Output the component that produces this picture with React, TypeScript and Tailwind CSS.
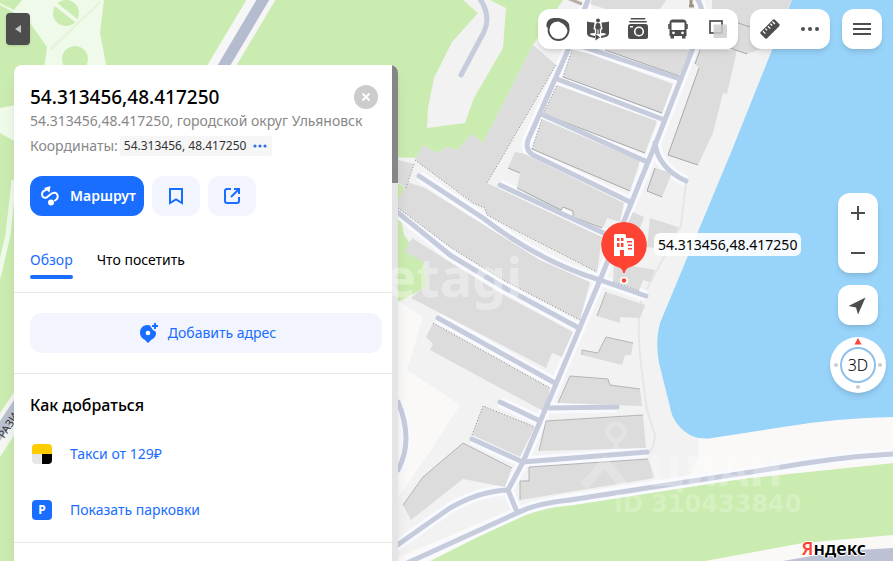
import { useState } from "react"
import type { ReactNode } from "react"

const BUILDINGS = [
  "592,0 666,0 652,22 640,20 590,4",
  "712,0 792,0 770,46 747,54 730,48 712,14",
  "605,50 690,50 679,76",
  "572,50 590,54 673,84 662,114 563,77",
  "557,85 657,121 645,153 543,114",
  "542,119 640,161 630,191 532,149",
  "515,152 525,154 624,203 620,222 607,218 603,228 573,217 573,211 563,207 561,212 517,188 520,173 508,168",
  "533,45 556,65 487,183 602,237 597,272 515,230 487,215 485,208 473,203 415,160 417,156 423,145 437,153 447,147 457,150 472,134 483,143",
  "398,160 414,164 406,188 398,182",
  "407,182 425,188 500,235 540,260 590,282 580,320 503,280 450,247 398,208 398,200",
  "412,238 450,262 500,293 573,332 562,357 552,353 546,368 440,313 411,298 427,285 424,262 405,252",
  "433,323 550,388 545,412 430,350 433,344 426,337",
  "483,406 535,427 520,457 472,435",
  "463,443 512,468 505,487 463,479 411,520 403,505 423,477",
  "570,376 608,379 610,385 640,389 642,406 558,403",
  "546,421 643,415 646,448 539,451",
  "529,467 648,459 655,478 520,500 520,481 529,480",
  "606,292 645,305 640,318 620,317 620,323 597,316",
  "606,337 633,343 631,355 625,355 622,365 582,355 582,350 598,353",
  "614,263 655,270 650,282 643,280 639,291 613,282",
  "633,212 644,217 638,234 625,228",
  "650,218 678,227 672,250 647,247",
  "655,168 672,173 662,197 647,191",
  "700,50 695,64 699,68 668,155 698,165 713,133 723,93 727,94 737,50",
]

const ROADS = [
  "M698 0 Q705 12 700 30 L657 140 L600 280 L523 462 L508 490 L517 512",
  "M588 0 L568 50 L528 140 Q525 150 533 155 L630 202",
  "M572 43 L680 79",
  "M557 79 L662 119",
  "M541 114 L645 161",
  "M655 143 Q658 168 686 181",
  "M500 185 L610 236",
  "M419 176 L483 218 Q540 262 600 280 L646 296",
  "M390 206 L450 255 L503 287 L577 327",
  "M438 318 L553 382",
  "M500 402 L538 420",
  "M472 439 L523 462 L647 452",
  "M550 408 L617 407",
  "M386 553 L450 508 Q480 491 508 490",
  "M398 402 Q414 440 398 470",
  "M405 564 L517 513 Q537 503 570 500 L647 488 L770 469 Q837 457 893 454 L2400 380",
]

function CityMap() {
  return (
    <svg className="absolute inset-0 h-full w-full" aria-hidden="true">
      <rect width="100%" height="100%" fill="#cbecb0" />

      {/* squares and alleys of the park on the left */}
      <path d="M20 0 H104 L100 33 L107 70 H44 L47 47 L30 23 L13 12 L0 5 V0Z" fill="#f0faea" />
      <path d="M0 0 H22 L14 10 L0 3Z" fill="#cbecb0" />
      <circle cx="66" cy="13" r="13" fill="#cbecb0" />
      <path d="M54 3 L78 22" stroke="#f0faea" strokeWidth="4" />
      <circle cx="75" cy="59" r="13" fill="#cbecb0" />
      <path d="M100 2 L50 50" stroke="#e3f4d7" strokeWidth="2" />
      <path d="M0 108 L16 105 V142 L0 133Z" fill="#f0faea" />
      <path d="M14 180 L8 235 L-2 278" fill="none" stroke="#f0faea" strokeWidth="5" />
      <path d="M-10 450 L26 396" stroke="#f4f6f2" strokeWidth="24" />
      <path d="M-10 446 L26 392" stroke="#b9c0d0" strokeWidth="11" />
      <text x="4" y="439" transform="rotate(-57 4 439)" className="font-['Noto_Sans',sans-serif] text-[11px]" fill="#333">РАЗИ</text>
      <path d="M265 -7 L215 77" stroke="#f6f6f6" strokeWidth="25" />
      <path d="M267 -7 L217 77" stroke="#b5bccf" strokeWidth="11" />

      {/* land */}
      <path d="M463 0 L478 13 L452 42 L434 78 L428 108 L427 128 L465 123 L474 98 L503 48 L506 8 L490 0Z" fill="#f2f2f2" />
      <path d="M478 -4 Q492 15 484 32 L461 75" fill="none" stroke="#c6ccdb" strokeWidth="5" strokeLinecap="round" />
      <path d="M563 0 L533 45 L483 143 L472 134 L457 150 L447 147 L437 153 L423 145 L417 158 L390 157 V183 L406 190 L398 203 L404 235 L424 262 L427 287 L390 306 V561 H430 L517 517 Q537 507 557 504 L647 493 L730 480 L893 463 L2400 390 V0Z" fill="#f2f2f2" />
      <path d="M390 236 L398 234 L422 262 L424 287 L390 304Z" fill="#cbecb0" />
      <path d="M398 183 L405 188 L398 200Z" fill="#cbecb0" />
      <path d="M390 296 L423 317 L407 370 L460 405 L433 447 L390 510Z" fill="#faf9f7" />
      <path d="M697 436 L893 412 L2400 390 L893 463 L730 480 L647 493 L557 504 L517 517 L430 561 H390 L517 507 L560 495 L690 475 Q703 450 697 436Z" fill="#faf9f7" />
      <path d="M792 0 L732 150 L660 323 Q655 340 659 363 L670 407 Q673 425 690 435 Q700 440 712 438 L783 427 Q837 418 893 417 L2400 340 V0Z" fill="#98d3f9" />
      <path d="M686 182 L681 225 L642 298 Q636 320 641 365 L647 410 L655 435 Q654 452 644 456" fill="none" stroke="#e6e6e6" strokeWidth="2" />

      <g fill="none" stroke="#f9faff" strokeWidth="11" strokeLinejoin="round">
        {ROADS.map((d) => <path key={d} d={d} />)}
      </g>
      <g fill="#dcdcdc">
        {BUILDINGS.map((p) => <polygon key={p} points={p} />)}
      </g>
      <g fill="none" stroke="#a9a9a9" strokeWidth="1">
        <path d="M563 77 L662 113 M543 114 L645 153 M532 149 L630 191 M605 50 L679 76 M508 168 L520 173 M517 188 L561 210 L563 207 L573 211 V217 L602 228 M699 68 L668 155 L698 165 M655 168 L647 191 L662 197 M712 14 L750 27 M730 48 L747 54 M700 50 L695 64" />
        <path d="M558 403 L570 376 L608 379 L610 385 L640 389 M539 451 L546 421 L643 415 M520 500 V481 H529 V467 L648 459 M403 505 L423 477 L463 443 L512 468 M597 316 L606 292 M582 355 V350 L598 353 L606 337 L633 343" strokeOpacity=".8" />
        <path d="M556 65 L487 183 M415 160 L473 203 L485 208 L487 215 L515 230 L597 272 M398 208 L450 247 L503 280 L580 320 M433 323 L550 388 M472 435 L483 406 L535 427 M414 164 L406 188 M532 149 L542 119 M543 114 L557 85 M563 77 L572 50 M613 282 L639 291" strokeDasharray="1 2" stroke="#888" />
      </g>
      <g fill="none" stroke="#c6ccdb" strokeWidth="5" strokeLinejoin="round" strokeLinecap="round">
        {ROADS.map((d) => <path key={d} d={d} />)}
      </g>
      <path d="M567 -2 L582 4" stroke="#b8aea6" strokeWidth="3" />
      <path d="M689 6 H694 M691 0 V6" stroke="#a09384" strokeWidth="3" />

      {/* avenue in the bottom right corner */}
      <path d="M705 561 L803 543 L893 535 L2400 400 V900 H705Z" fill="#faf9f8" />
      <path d="M783 561 Q840 550 893 548 L2400 420 V900 H783Z" fill="#bcc2d3" />
    </svg>
  )
}

function Watermarks() {
  return (
    <svg className="pointer-events-none absolute inset-0 h-full w-full font-bold" aria-hidden="true">
      <text x="384" y="297" fill="#fff" fillOpacity=".35" className="font-['Noto_Sans',sans-serif] text-[54px]">etagi</text>
      <g fill="none" stroke="#fff" strokeOpacity=".22">
        <circle cx="616" cy="432" r="8" strokeWidth="5" />
        <path d="M616 442 V451" strokeWidth="4" />
        <path d="M584 486 L605 462 L624 486" strokeWidth="9" />
      </g>
      <text x="648" y="486" fill="#fff" fillOpacity=".25" className="font-['DejaVu_Sans',sans-serif] text-[40px]">ЦИАН</text>
      <text x="614" y="512" fill="#fff" fillOpacity=".22" className="font-['DejaVu_Sans',sans-serif] text-[24px]">ID 310433840</text>
    </svg>
  )
}

function ToolButton({ label, children, onClick }: { label: string; children: ReactNode; onClick?: () => void }) {
  return (
    <button type="button" aria-label={label} onClick={onClick} className="flex h-10 w-10 items-center justify-center text-[#4d4d4d]">
      {children}
    </button>
  )
}

function Toolbar() {
  return (
    <header className="flex justify-end gap-3 pt-[9px] pr-[11px]">
      <div className="flex rounded-xl bg-white shadow-md">
        <ToolButton label="Алиса">
          <svg width="24" height="24" viewBox="0 0 24 24">
            <circle cx="12.500" cy="13" r="10" fill="#fff" stroke="#4d4d4d" strokeWidth="1.800" />
            <path d="M.5 10 C0 3 4 .8 10 1 C16 .8 22 3 23.300 8 V14 L21.500 13 C20 9 17 6 12.500 4.500 C8 4 4 7 2.500 11Z" fill="#4d4d4d" />
          </svg>
        </ToolButton>
        <ToolButton label="Панорамы">
          <svg width="24" height="24" viewBox="0 0 24 24" fill="#4d4d4d">
            <path d="M1 4.500 Q4 5.500 8.500 5.500 L7.500 12.500 H8.800 V16 Q5 16 3.500 17 Q5 18.500 9 19 V21 Q1 20 1 16.500Z" />
            <path d="M23 4.500 Q20 5.500 15.500 5.500 L16.500 12.500 H15.200 V16 Q19 16 20.500 17 Q19 18.500 15 19 V21 Q23 20 23 16.500Z" />
            <circle cx="12" cy="3.500" r="2" />
            <path d="M10 6.500 Q12 5.500 14 6.500 L15 11.500 H13.800 V17 H12.500 V12.500 H11.500 V17 H10.200 V11.500 H9Z" />
            <path d="M9.500 17 L14 20.200 L9.500 23.500Z" />
          </svg>
        </ToolButton>
        <ToolButton label="Фото">
          <svg width="24" height="24" viewBox="0 0 24 24" fill="#4d4d4d">
            <rect x="4.500" y="1" width="15" height="1.500" rx=".7" />
            <rect x="3" y="4" width="18" height="1.600" rx=".8" />
            <rect x="2" y="7" width="20" height="15" rx="2.500" />
            <circle cx="13" cy="14.500" r="4.300" fill="none" stroke="#fff" strokeWidth="1.600" />
            <rect x="4" y="9" width="3" height="1.500" fill="#fff" />
          </svg>
        </ToolButton>
        <ToolButton label="Транспорт">
          <svg width="24" height="24" viewBox="0 0 24 24">
            <path fillRule="evenodd" fill="#4d4d4d" d="M7 2.500 H17 Q20.500 2.500 20.500 6 V19 H19.500 V21.500 H16 V19 H8 V21.500 H4.500 V19 H3.500 V6 Q3.500 2.500 7 2.500Z M5.500 5.500 V13 H18.500 V5.500Z M7.500 14.500 a1.400 1.400 0 1 0 .01 0Z M16.500 14.500 a1.400 1.400 0 1 0 .01 0Z" />
            <path d="M3 7 V12 M21 7 V12" stroke="#4d4d4d" strokeWidth="1.600" />
          </svg>
        </ToolButton>
        <ToolButton label="Слои">
          <svg width="24" height="24" viewBox="0 0 24 24">
            <rect x="4" y="4" width="12" height="12" fill="none" stroke="#4d4d4d" strokeWidth="1.700" />
            <rect x="7.500" y="7.500" width="13.500" height="13.500" rx="1" fill="#ccc" fillOpacity=".85" />
          </svg>
        </ToolButton>
      </div>
      <div className="flex rounded-xl bg-white shadow-md">
        <ToolButton label="Линейка">
          <svg width="24" height="24" viewBox="0 0 24 24">
            <g transform="rotate(-45 12 12)">
              <rect x="2" y="7.500" width="20" height="9" rx="1.500" fill="#4d4d4d" />
              <path d="M5.500 8.500 V12 M9 8.500 V11 M12.500 8.500 V12 M16 8.500 V11 M19 8.500 V12" stroke="#fff" strokeWidth="1.300" />
            </g>
          </svg>
        </ToolButton>
        <ToolButton label="Ещё">
          <svg width="20" height="4" viewBox="0 0 20 4" fill="#4d4d4d">
            <circle cx="3" cy="2" r="2" />
            <circle cx="10" cy="2" r="2" />
            <circle cx="17" cy="2" r="2" />
          </svg>
        </ToolButton>
      </div>
      <div className="flex rounded-xl bg-white shadow-md">
        <ToolButton label="Меню">
          <svg width="18" height="14" viewBox="0 0 18 14">
            <path d="M0 2 H18 M0 7 H18 M0 12 H18" stroke="#4d4d4d" strokeWidth="2" />
          </svg>
        </ToolButton>
      </div>
    </header>
  )
}

function MapControls() {
  return (
    <div className="mt-36 mr-[7px] flex flex-col items-center gap-3 self-end">
      <div className="flex flex-col rounded-xl bg-white shadow-md">
        <ToolButton label="Приблизить">
          <svg width="14" height="14" viewBox="0 0 14 14"><path d="M0 7 H14 M7 0 V14" stroke="#4d4d4d" strokeWidth="2" /></svg>
        </ToolButton>
        <ToolButton label="Отдалить">
          <svg width="14" height="14" viewBox="0 0 14 14"><path d="M0 7 H14" stroke="#4d4d4d" strokeWidth="2" /></svg>
        </ToolButton>
      </div>
      <div className="flex rounded-xl bg-white shadow-md">
        <ToolButton label="Моё местоположение">
          <svg width="24" height="24" viewBox="0 0 24 24"><path d="M19.500 4.500 L12 21.500 L10 14.500 L2.500 13Z" fill="#4d4d4d" /></svg>
        </ToolButton>
      </div>
      <button type="button" className="relative flex h-14 w-14 items-center justify-center rounded-full bg-white shadow-md">
        <svg className="absolute inset-0" width="56" height="56" viewBox="0 0 56 56">
          <path d="M28 1 L31.500 7.500 H24.500Z" fill="#ff4433" />
          <circle cx="28" cy="28" r="17" fill="none" stroke="#8fc0ea" strokeWidth="2" />
          <circle cx="6" cy="28" r="2" fill="#ccc" />
          <circle cx="50" cy="28" r="2" fill="#ccc" />
          <circle cx="28" cy="50" r="2" fill="#ccc" />
        </svg>
        <span className="relative text-base font-light text-black">3D</span>
      </button>
    </div>
  )
}

function Marker() {
  return (
    <div className="absolute top-[221px] left-[600px] flex items-start gap-[6px]">
      <svg width="48" height="66" viewBox="0 0 48 66" aria-hidden="true">
        <rect x="20" y="56" width="8" height="7" rx="3" fill="#fff" />
        <circle cx="24" cy="59.500" r="2.200" fill="#f43" />
        <path d="M24 1 A23 23 0 0 1 29 46.400 Q25.500 47.500 24.700 52 H23.300 Q22.500 47.500 19 46.400 A23 23 0 0 1 24 1Z" fill="#ff4433" />
        <path fill="#fff" fillRule="evenodd" d="M15 13 H24 Q26 13 26 15 V17 H31 Q34 17 34 20 V35 H24 V29 H20 V35 H14 V14Z M17 17 V20 H19.500 V17Z M21 17 V20 H23.500 V17Z M17 22 V26 H19.500 V22Z M21 22 V26 H23.500 V22Z M27 20 V21.500 H32 V20Z M28 23.500 V25 H32 V23.500Z M28 27 V28.500 H32 V27Z" />
      </svg>
      <span className="mt-3 rounded-md bg-white/90 px-1 text-sm leading-[23px] whitespace-nowrap text-black">54.313456,48.417250</span>
    </div>
  )
}

function PlacePanel() {
  const [tab, setTab] = useState("overview")

  const tabs = [
    { id: "overview", title: "Обзор" },
    { id: "visit", title: "Что посетить" },
  ]

  return (
    <section className="mt-5 ml-3.5 flex min-h-0 flex-1 overflow-hidden rounded-t-lg bg-white shadow-lg">
      <div className="min-w-0 flex-1 overflow-hidden">
        <div className="pt-[18px] pr-2.5 pl-4">
          <div className="flex items-center justify-between">
            <h1 className="text-[19px] leading-7 font-medium text-black">54.313456,48.417250</h1>
            <button type="button" aria-label="Закрыть" className="mr-1 flex h-6 w-6 items-center justify-center rounded-full bg-[#ccc]">
              <svg width="8" height="8" viewBox="0 0 8 8"><path d="M.5 .5 L7.500 7.500 M7.500 .5 L.5 7.500" stroke="#fff" strokeWidth="2" /></svg>
            </button>
          </div>
          <p className="text-sm leading-5 whitespace-nowrap text-[#888]">54.313456,48.417250, городской округ Ульяновск</p>
          <div className="mt-[5px] flex items-center text-sm leading-5 text-[#888]">
            <span>Координаты:</span>
            <span className="ml-0.5 flex h-5 items-center rounded-xs bg-[#f6f6f6] pr-1 pl-1 text-xs text-[#333]">
              54.313456, 48.417250
              <button type="button" aria-label="Другие форматы" className="ml-1.5">
                <svg width="16" height="4" viewBox="0 0 16 4" fill="#2f6fe4">
                  <circle cx="3" cy="2" r="1.600" />
                  <circle cx="8" cy="2" r="1.600" />
                  <circle cx="13" cy="2" r="1.600" />
                </svg>
              </button>
            </span>
          </div>

          <div className="mt-5 flex gap-2">
            <button type="button" className="flex h-10 items-center gap-2 rounded-xl bg-[#196dff] px-2 text-sm font-semibold text-white">
              <svg width="24" height="24" viewBox="0 0 24 24" fill="none" stroke="#fff" strokeWidth="2" strokeLinecap="round">
                <path d="M8 6 Q4 7 4 10.500 Q4.500 14.500 8.500 13.500 L13 10 Q18 7 19.500 11 Q20.500 14.500 17 16.500" />
                <path d="M6 4 L12.500 2 L11.500 8.500Z" fill="#fff" stroke="none" />
                <circle cx="13" cy="18.500" r="3" fill="#fff" stroke="none" />
              </svg>
              Маршрут
            </button>
            <button type="button" aria-label="Сохранить" className="flex h-10 w-12 items-center justify-center rounded-xl bg-[#f2f5fd]">
              <svg width="24" height="24" viewBox="0 0 24 24"><path d="M6 5 H18 V19 L12 15.500 L6 19Z" fill="none" stroke="#196dff" strokeWidth="2" /></svg>
            </button>
            <button type="button" aria-label="Поделиться" className="flex h-10 w-12 items-center justify-center rounded-xl bg-[#f2f5fd]">
              <svg width="24" height="24" viewBox="0 0 24 24" fill="none" stroke="#196dff" strokeWidth="2">
                <path d="M11 5 H7 Q5 5 5 7 V17 Q5 19 7 19 H17 Q19 19 19 17 V13" />
                <path d="M14 5 H19 V10 M19 5 L11 13" />
              </svg>
            </button>
          </div>

          <div className="mt-[34px] flex gap-6 pb-[13px]" role="tablist">
            {tabs.map((t) => (
              <button
                key={t.id}
                type="button"
                role="tab"
                aria-selected={tab === t.id}
                onClick={() => setTab(t.id)}
                className={tab === t.id ? "text-sm leading-5 text-[#196dff]" : "text-sm leading-5 text-black"}
              >
                {t.title}
                <span className={tab === t.id ? "mt-[5px] block h-1 rounded-full bg-[#196dff]" : "mt-[5px] block h-1"} />
              </button>
            ))}
          </div>
        </div>

        <div className="border-t border-[#e7e7e7] py-5 pr-2.5 pl-4">
          <button type="button" className="flex h-10 w-full items-center justify-center gap-2 rounded-xl bg-[#f2f5fd] text-sm text-[#196dff]">
            <svg width="24" height="24" viewBox="0 0 24 24">
              <path d="M14 4.500 Q11 3.500 7.500 5 Q3.500 7.500 4 12.500 Q4.500 16.500 9 19 L12 22 L15 19 Q20.500 16.500 20 11 L16.500 8.500Z" fill="#196dff" />
              <circle cx="12" cy="12" r="2.300" fill="#fff" />
              <path d="M19 2 V8 M16 5 H22" stroke="#196dff" strokeWidth="2" />
            </svg>
            Добавить адрес
          </button>
        </div>

        <div className="border-t border-[#e7e7e7] pt-[19px] pl-4">
          <h2 className="text-base leading-6 font-medium text-black">Как добраться</h2>
          <a href="#taxi" className="mt-[9px] flex h-14 items-center gap-[18px] pl-0.5 text-sm text-[#196dff]">
            <svg width="20" height="20" viewBox="0 0 20 20">
              <path d="M0 10 V4 Q0 0 4 0 H16 Q20 0 20 4 V10Z" fill="#fc0" />
              <path d="M0 10 H9.500 V20 H4 Q0 20 0 16Z" fill="#e6e6e6" />
              <path d="M10 10 H20 V16 Q20 20 16 20 H10Z" fill="#000" />
            </svg>
            Такси от 129₽
          </a>
          <a href="#parking" className="flex h-14 items-center gap-[18px] pl-0.5 text-sm text-[#196dff]">
            <span className="flex h-5 w-5 items-center justify-center rounded bg-[#196dff] text-xs font-bold text-white">P</span>
            Показать парковки
          </a>
        </div>
        <div className="mt-1 border-t border-[#e7e7e7]" />
      </div>
      <div className="w-1.5 shrink-0 bg-[#e5e5e5]">
        <div className="h-[118px] bg-[#868686]" />
      </div>
    </section>
  )
}

export default function App() {
  const [open, setOpen] = useState(true)

  return (
    <main className="relative flex h-screen overflow-hidden font-['Noto_Sans',sans-serif]">
      <CityMap />
      <Marker />

      <aside className="relative flex w-[398px] shrink-0 flex-col">
        <button
          type="button"
          aria-label="Свернуть"
          onClick={() => setOpen(!open)}
          className="mt-[13px] ml-1.5 flex h-8 w-6 shrink-0 items-center justify-center rounded bg-[#4d4d4d] shadow"
        >
          <svg width="6" height="8" viewBox="0 0 6 8"><path d="M6 0 V8 L0 4Z" fill="#c4c4c4" /></svg>
        </button>
        {open && <PlacePanel />}
      </aside>

      <Watermarks />

      <div className="relative flex flex-1 flex-col">
        <Toolbar />
        <MapControls />
        <a
          href="#yandex"
          className="mt-auto mr-[27px] self-end text-lg leading-[26px] font-semibold text-black [text-shadow:1px_0_#fff,-1px_0_#fff,0_1px_#fff,0_-1px_#fff]"
        >
          <span className="text-[#f43]">Я</span>ндекс
        </a>
      </div>
    </main>
  )
}
